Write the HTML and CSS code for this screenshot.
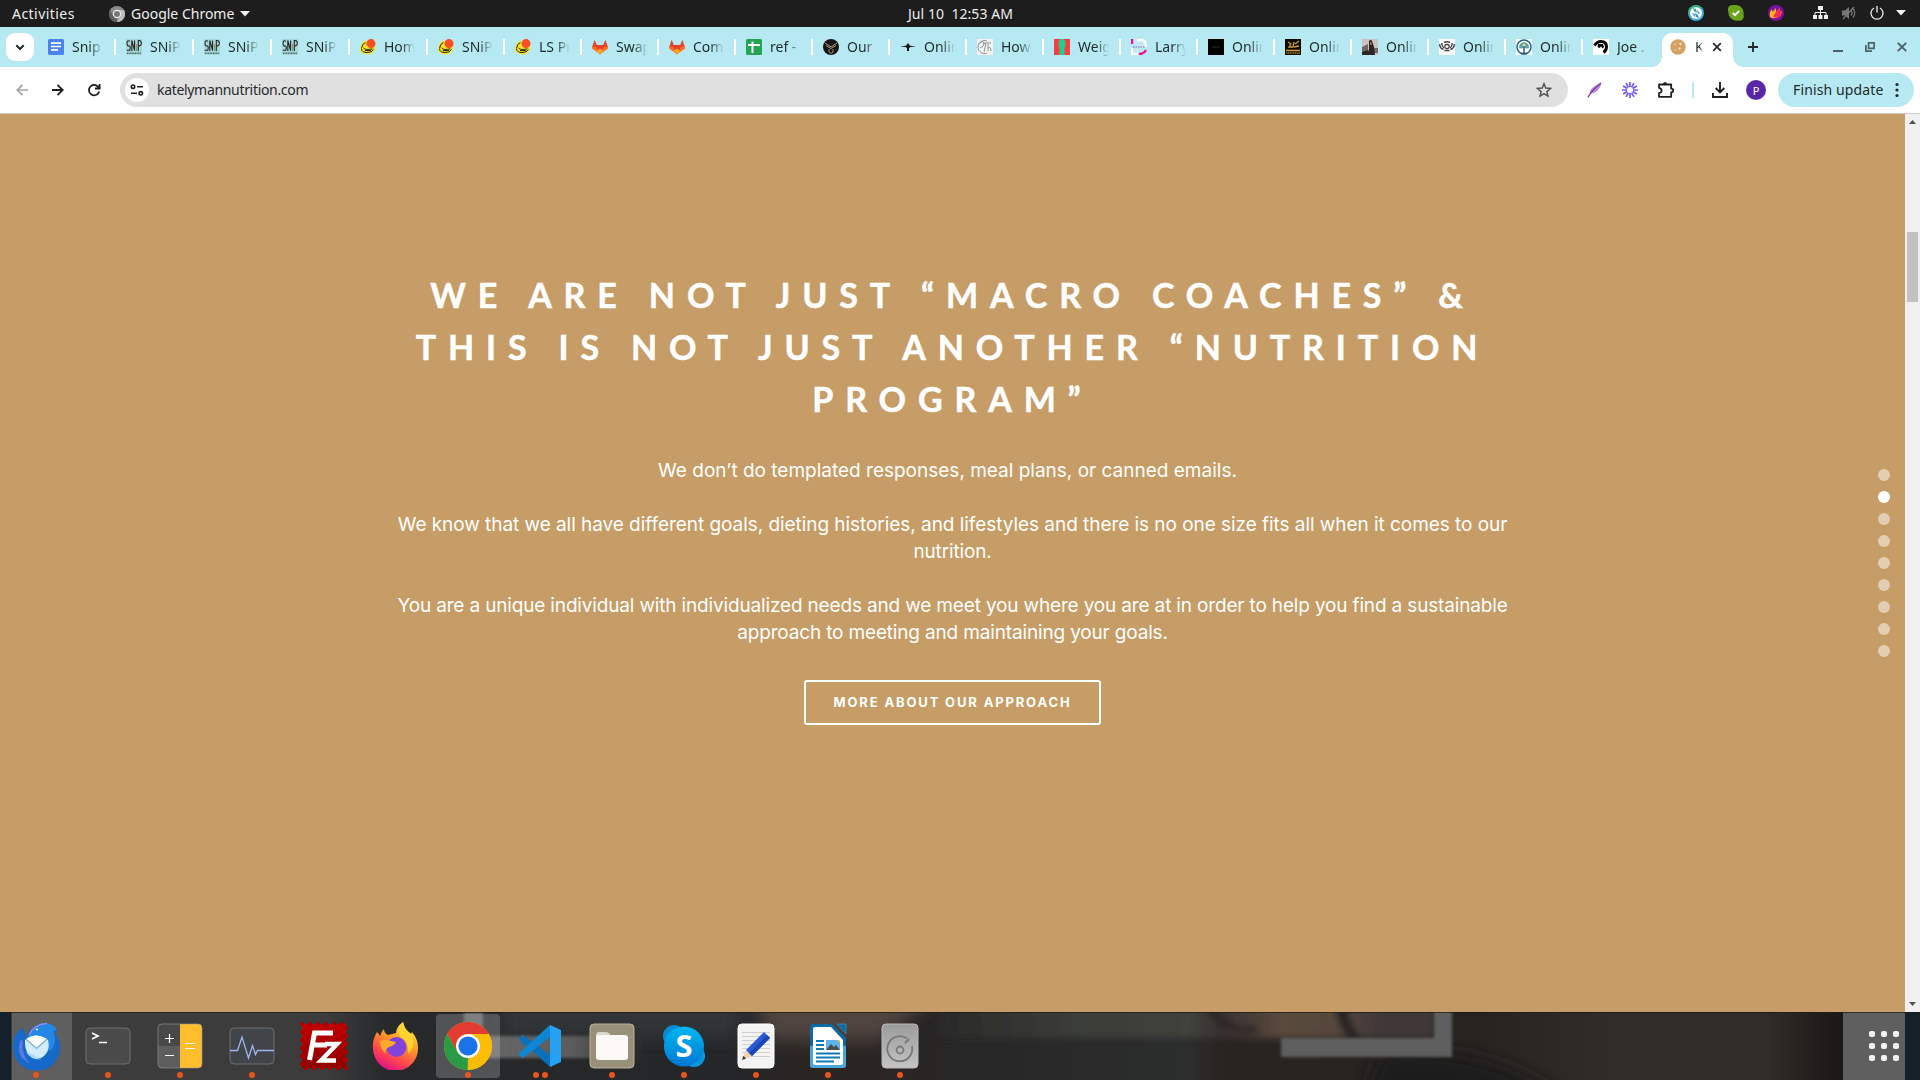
FILE: index.html
```html
<!DOCTYPE html>
<html lang="en">
<head>
<meta charset="utf-8">
<title>katelymannutrition.com</title>
<link rel="stylesheet" href="styles.css">
</head>
<body>
<svg class="defs" aria-hidden="true">
  <symbol id="snip" viewBox="0 0 16 16"><path fill="#a9d5d6" d="M0 0h16v16H0z"/><path fill="none" stroke="#20282a" stroke-width="1.1" d="M4 2.200Q1 .8 1 4t2 3 .8 4.300H.8M5.800 12V1.500l2.800 10V1.500M12.300 12V1.600q3-.5 3 2.600t-3 2.600"/><path stroke="#d87a3a" d="M10.500 5v3"/><path stroke="#46b58c" d="M10.500 8v4"/><path stroke="#49646a" stroke-width="1.400" stroke-dasharray="1 .6" d="M1 14.300h14"/></symbol>
  <symbol id="hat" viewBox="0 0 16 16"><path fill="#f7e32a" d="M0 9Q1 3 6 1.500L15.500 8Q15 14.500 8 15.500 1 15 0 11z"/><path fill="none" stroke="#2a260a" stroke-width="1" d="M1.500 9.500Q2 4.500 5.500 3.500M3.500 9q2 2.500 9 .8M1.500 10q.5 3.500 5.500 3.500 5 0 6.500-3M5 11.600l6-.3"/><circle cx="11" cy="4.600" r="4.500" fill="#fb4d22"/></symbol>
  <symbol id="fox" viewBox="0 0 16 16"><path fill="#e24329" d="M2.700.7 4.700 6h6.600l2-5.300L16 8.500 8 15.300 0 8.500z"/><path fill="#fc6d26" d="M.3 7.500 4 8l4 7.300L0 9.500zM15.700 7.500 12 8l-4 7.300L16 9.500z"/><path fill="#fca326" d="M4.500 12 8 9.500l3.500 2.500L8 15.500z"/></symbol>
  <symbol id="chrome" viewBox="0 0 48 48"><circle cx="24" cy="24" r="24" fill="#fbbc05"/><path fill="#e23b32" d="M3.200 12A24 24 0 0 1 44.800 12H24L13.600 30z"/><path fill="#2a9a46" d="M3.200 12 13.600 30 24 36l-.4 12A24 24 0 0 1 3.200 12z"/><path fill="#fbbc05" d="M24 12h20.800A24 24 0 0 1 23.600 48L34.400 30z"/><circle cx="24" cy="24" r="12" fill="#fff"/><circle cx="24" cy="24" r="9.600" fill="#1a73e8"/></symbol>
</svg>

<header class="topbar">
  <span class="activities">Activities</span>
  <span class="appmenu">
    <svg width="16" height="16" viewBox="0 0 16 16"><circle cx="8" cy="8" r="8" fill="#8b8b8b"/><path fill="#bdbdbd" d="M8 4h7A8 8 0 0 1 8 16l3.500-6z"/><path fill="#5f5f5f" d="M1 4 4.500 10 8 12v4A8 8 0 0 1 1 4z"/><circle cx="8" cy="8" r="4.200" fill="#eee"/><circle cx="8" cy="8" r="3" fill="#777"/></svg>
    <span class="appname">Google Chrome</span>
    <svg width="10" height="6" viewBox="0 0 10 6"><path fill="#f2f2f2" d="M0 0h10L5 5.500z"/></svg>
  </span>
  <span class="clock">Jul 10&nbsp; 12:53 AM</span>
  <span class="tray">
    <svg class="t1" width="16" height="16" viewBox="0 0 16 16"><circle cx="8" cy="8" r="8" fill="#3fa9e0"/><path fill="#27b27c" d="M0 8a8 8 0 0 1 14-5L8 8z"/><circle cx="8" cy="8" r="6" fill="#fff"/><path fill="#2aa98c" d="m5 3 3 1 1 4-3-2z"/><path fill="#3192d8" d="m11 13-3-1-1-4 3 2zM9 5l3 3-2 1zM4 8l3 1v3z"/></svg>
    <svg class="t2" width="16" height="16" viewBox="0 0 16 16"><path fill="#68a51c" d="M4 0h4a8 8 0 0 1 7.500 9.500A4.500 4.500 0 0 1 10 15.500 8 8 0 0 1 .5 7 4.500 4.500 0 0 1 4 0z"/><path fill="none" stroke="#fff" stroke-width="1.800" d="m4.800 8 2.200 2.200 4.200-4.400"/></svg>
    <svg class="t3" width="16" height="16" viewBox="0 0 16 16"><circle cx="8" cy="8" r="8" fill="#7d109c"/><path fill="#ffb31f" d="M2 12Q1 7 4 4l.5 3L8 3v4l4-4-1 4 3-1q0 5-5 6.500T2 12z"/><path fill="#f52a5a" d="m8 7 4-4-1 4 3-1q0 5-5 6.500-3 0-4-1z"/></svg>
    <svg class="t4" width="15" height="14" viewBox="0 0 15 14"><path fill="#eee" d="M5 0h5v4H5zM0 9h4v4H0zM5.500 9h4v4h-4zM11 9h4v4h-4z"/><path fill="none" stroke="#eee" d="M7.500 4v5M2 9V6.500h11V9"/></svg>
    <svg class="t5" width="15" height="14" viewBox="0 0 15 14"><path fill="#777" d="M0 4.500h3L7 1v12L3 9.500H0z"/><path fill="none" stroke="#777" stroke-width="1.300" d="M9 4.500q2 2.500 0 5M11 2.500q3.500 4.500 0 9M1 13 12 1"/></svg>
    <svg class="t6" width="14" height="14" viewBox="0 0 14 14"><path fill="none" stroke="#eee" stroke-width="1.300" d="M4 2a6 6 0 1 0 6 0M7 0v6.500"/></svg>
    <svg class="t7" width="10" height="6" viewBox="0 0 10 6"><path fill="#f2f2f2" d="M0 0h10L5 5.500z"/></svg>
  </span>
</header>

<nav class="tabs">
  <span class="tabsearch"><svg width="28" height="28" viewBox="0 0 28 28"><path fill="none" stroke="#1f2a2c" stroke-width="2" d="m10.300 12.300 3.700 3.700 3.700-3.700"/></svg></span>
  <div class="tab wide"><svg viewBox="0 0 16 16"><rect width="16" height="16" rx="1.500" fill="#4c82ee"/><path stroke="#fff" stroke-width="1.700" d="M3 4.200h10M3 7.500h10M3 10.900h7"/></svg><span>Snip</span></div>
  <div class="tab wide"><svg><use href="#snip"/></svg><span>SNiP</span></div>
  <div class="tab wide"><svg><use href="#snip"/></svg><span>SNiP</span></div>
  <div class="tab wide"><svg><use href="#snip"/></svg><span>SNiP</span></div>
  <div class="tab wide"><svg><use href="#hat"/></svg><span>Hom</span></div>
  <div class="tab"><svg><use href="#hat"/></svg><span>SNiP</span></div>
  <div class="tab"><svg><use href="#hat"/></svg><span>LS Pr</span></div>
  <div class="tab"><svg><use href="#fox"/></svg><span>Swap</span></div>
  <div class="tab"><svg><use href="#fox"/></svg><span>Com</span></div>
  <div class="tab"><svg viewBox="0 0 16 16"><rect width="16" height="16" rx="1.500" fill="#23a455"/><path stroke="#fff" stroke-width="2" d="M2 6h12M6.500 2.500V14"/></svg><span>ref -</span></div>
  <div class="tab"><svg viewBox="0 0 16 16"><circle cx="8" cy="8" r="8" fill="#151413"/><path fill="none" stroke="#b6a68b" stroke-width=".9" d="m2 4 6 4 6-4M3 6.500l5 3 5-3M6 10v3l2 1.500 2-1.500v-3"/></svg><span>Our</span></div>
  <div class="tab"><svg viewBox="0 0 16 16"><path fill="#0b1517" d="M0 7.500 6 6.700 7.500 4.500h1L10 6.700l6 .8-5.500.6L9 9v3H7V9L5.500 8.100z"/></svg><span>Onlin</span></div>
  <div class="tab"><svg viewBox="0 0 16 16"><path fill="#f4f4f2" d="M0 0h16v16H0z"/><path fill="none" stroke="#8c9297" d="M10 2A6.500 6.500 0 1 0 10 14M2 5q4-4 5-1t-4 5M6 4h8M9 4 7 13M11 5v7m0-3q3-2 3 3"/></svg><span>How</span></div>
  <div class="tab"><svg viewBox="0 0 16 16"><path fill="#f93e43" d="M0 0h16v16H0z"/><path fill="#20cf8c" d="M5 1.500 7 0h2l2 1.500L12 10l-1.500-4v10h-5V6L4 10z"/></svg><span>Weig</span></div>
  <div class="tab"><svg viewBox="0 0 16 16"><path fill="#bfeaf2" d="M0 0h16v16H0z"/><path fill="none" stroke="#fff" stroke-width="2.500" d="M6 1h4.500Q15 1.500 15 8M1 9v6h6"/><path fill="none" stroke="#ed1199" stroke-width="2.500" d="M15 11q-1.500 4-7 4M1 0v5"/><path stroke="#a7a3d8" stroke-width="2" stroke-dasharray="1.500 1" d="M2 8h12"/></svg><span>Larry</span></div>
  <div class="tab"><svg viewBox="0 0 16 16"><path d="M0 0h16v16H0z"/><path stroke="#444" stroke-dasharray="1 .7" d="M4 8h8"/></svg><span>Onlin</span></div>
  <div class="tab"><svg viewBox="0 0 16 16"><path fill="#0b0904" d="M0 0h16v16H0z"/><path fill="none" stroke="#cf9a3c" stroke-width="1.300" d="m3 3 3 2-2 3h4l1-5M10 5l4-3M9 8l5-1M1 11.500h14"/><path stroke="#a67827" stroke-width="1.600" stroke-dasharray="1.300 .5" d="M1 14h14"/></svg><span>Onlin</span></div>
  <div class="tab"><svg viewBox="0 0 16 16"><path fill="#c9c4c1" d="M0 0h16v16H0z"/><path fill="#77665e" d="M0 8 6 5v6l-6 3zM11 9h5v5h-5z"/><path fill="#2b2526" d="M7 2q2-2 3 0l2 6 1 8H5l2-6zM0 13l6-2v5H0z"/><path fill="#b0785d" d="M8 3h1.500v3H8z"/></svg><span>Onlin</span></div>
  <div class="tab"><svg viewBox="0 0 16 16"><path fill="#fafafa" d="M0 0h16v16H0z"/><circle cx="8" cy="7.500" r="2.200" fill="none" stroke="#3c3c3c" stroke-width="1.200"/><path fill="none" stroke="#444" stroke-width="1.400" d="M.8 5q-.5 4 3.700 5.500M3 4q-.5 3 2 5M15.200 5q.5 4-3.700 5.500M13 4q.5 3-2 5M5 3.500q3-1.500 6 0M5.500 11.500h5"/></svg><span>Onlin</span></div>
  <div class="tab"><svg viewBox="0 0 16 16"><path fill="#fff" d="M0 0h16v16H0z"/><circle cx="8" cy="8" r="7" fill="none" stroke="#22638c" stroke-width="1.500"/><path fill="#5aa0ab" d="M3 9q0-5 5-6 5 1 5 6-2 1-5-.5Q5 10 3 9z"/><path stroke="#1e5378" stroke-width="1.400" d="M8 6v8M5 14.500h6"/><circle cx="8" cy="6" r="1.500" fill="#f2d466"/></svg><span>Onlin</span></div>
  <div class="tab last"><svg viewBox="0 0 16 16"><path fill="#fff" d="M0 0h16v16H0z"/><path fill="none" stroke="#080808" stroke-width="3" d="M1.500 6.500Q4 2.500 8 2.500q5.500 0 5.500 5.500 0 3-3 5.500"/><path fill="#080808" d="M5 5h5l1 3-1.500 1.500L8 7.500 6.500 9 4.500 8z"/></svg><span>Joe .</span></div>
  <div class="tab active"><svg viewBox="0 0 16 16"><circle cx="8" cy="8" r="7.700" fill="#d5a163"/><g fill="#f3dfc2"><circle cx="5" cy="5.500" r=".8"/><circle cx="10.500" cy="5" r="1.200"/><circle cx="5.500" cy="11" r=".8"/><circle cx="9.500" cy="9.500" r="1.200"/></g></svg><span>K</span><svg class="x" viewBox="0 0 10 10"><path stroke="#24292b" stroke-width="1.700" d="m1.200 1.200 7.600 7.600m0-7.600L1.200 8.800"/></svg></div>
  <svg class="plus" viewBox="0 0 10 10"><path stroke="#20292b" stroke-width="1.800" d="M5 0v10M0 5h10"/></svg>
  <div class="win">
    <svg viewBox="0 0 10 10"><path fill="#4d6266" d="M0 8h10v2H0z"/></svg>
    <svg viewBox="0 0 10 10"><path fill="none" stroke="#4d6266" stroke-width="1.700" d="M3.600.9h5.500v5.500H3.600zM.9 3v6.100H7"/></svg>
    <svg viewBox="0 0 10 10"><path stroke="#4d6266" stroke-width="1.900" d="m.8.8 8.400 8.400m0-8.400L.8 9.200"/></svg>
  </div>
</nav>

<div class="toolbar">
  <span class="cell"><svg width="12" height="12" viewBox="0 0 12 12"><path fill="none" stroke="#a2a2a2" stroke-width="1.700" d="M12 6H1.500M6.500.8 1.300 6l5.200 5.200"/></svg></span>
  <span class="cell"><svg width="12" height="12" viewBox="0 0 12 12"><path fill="none" stroke="#1f1f1f" stroke-width="1.800" d="M0 6h10.500M5.500.8 10.700 6l-5.200 5.200"/></svg></span>
  <span class="cell"><svg width="14" height="14" viewBox="0 0 14 14"><path fill="none" stroke="#1f1f1f" stroke-width="1.800" d="M12 5.200A5.200 5.200 0 1 0 12.200 8.500M12.600 1v4.500H8"/></svg></span>
  <div class="omnibox">
    <span class="site"><svg width="14" height="12" viewBox="0 0 14 12"><g fill="none" stroke="#1f1f1f" stroke-width="1.600"><circle cx="3" cy="2.700" r="1.700"/><path d="M7 2.700h6M1 9.300h6"/><circle cx="10.800" cy="9.300" r="1.700"/></g></svg></span>
    <span class="url">katelymannutrition.com</span>
    <svg class="star" width="16" height="16" viewBox="0 0 16 16"><path fill="none" stroke="#555" stroke-width="1.500" d="m8 1.800 1.800 4.300 4.700.4-3.600 3.100L12 14.200 8 11.700l-4 2.500 1.100-4.600L1.500 6.500l4.700-.4z"/></svg>
  </div>
  <span class="cell ext1"><svg width="15" height="16" viewBox="0 0 15 16"><path fill="#b98ad2" d="M2.500 11.500Q3 7 7 4.500 11 2 14.500.5 14 5 11 8q-3 3.500-8.500 3.500z"/><path stroke="#7d35a5" stroke-width="1.300" fill="none" d="M.8 15.500Q5 8 14 1"/></svg></span>
  <span class="cell"><svg width="16" height="16" viewBox="0 0 16 16"><g stroke="#6b57f2" stroke-width="1.700"><path d="M8 0v5M8 11v5M0 8h5M11 8h5M4 1.100l2.500 4.300M9.500 10.600l2.500 4.300M12 1.100 9.500 5.400M6.500 10.600 4 14.900M1.100 4l4.300 2.500M10.600 9.500l4.300 2.500M14.900 4l-4.300 2.500M5.400 9.500 1.100 12"/></g></svg></span>
  <span class="cell ext3"><svg width="18" height="18" viewBox="0 0 18 18"><path fill="none" stroke="#1f1f1f" stroke-width="1.800" stroke-linejoin="round" d="M2 3.500h12.200v4.200q2 .2 2 1.800t-2 1.800v4.500H2v-3.600q2.600-.6 2.600-2.700T2 6.800z"/><path fill="#1f1f1f" d="M5.700 3.500q.3-2.500 2.300-2.500t2.300 2.500z"/></svg></span>
  <span class="divider"></span>
  <span class="cell dl"><svg width="16" height="16" viewBox="0 0 16 16"><path fill="none" stroke="#1f1f1f" stroke-width="1.900" d="M8 0v10M3.700 6 8 10.300 12.300 6M1 11v4h14v-4"/></svg></span>
  <span class="avatar">P</span>
  <span class="update"><span>Finish update</span><svg width="4" height="16" viewBox="0 0 4 16"><g fill="#1f2a2c"><circle cx="2" cy="2.500" r="1.600"/><circle cx="2" cy="8" r="1.600"/><circle cx="2" cy="13.500" r="1.600"/></g></svg></span>
</div>

<main class="viewport">
  <section class="page">
    <h1><span>WE ARE NOT JUST “MACRO COACHES” &amp;</span><span>THIS IS NOT JUST ANOTHER “NUTRITION</span><span>PROGRAM”</span></h1>
    <p class="lead">We don’t do templated responses, meal plans, or canned emails.</p>
    <p>We know that we all have different goals, dieting histories, and lifestyles and there is no one size fits all when it comes to our<br><span class="tight">nutrition.</span></p>
    <p class="tight">You are a unique individual with individualized needs and we meet you where you are at in order to help you find a sustainable<br>approach to meeting and maintaining your goals.</p>
    <a class="cta">MORE ABOUT OUR APPROACH</a>
    <div class="dots"><i></i><i class="on"></i><i></i><i></i><i></i><i></i><i></i><i></i><i></i></div>
  </section>
  <aside class="scroll">
    <svg width="7" height="4" viewBox="0 0 7 4"><path fill="#505050" d="M0 4h7L3.500 0z"/></svg>
    <div class="thumb"></div>
    <svg class="down" width="7" height="4" viewBox="0 0 7 4"><path fill="#505050" d="M0 0h7L3.500 4z"/></svg>
  </aside>
</main>

<footer class="dock">
  <svg class="wall" width="1920" height="68" viewBox="0 0 1920 68" preserveAspectRatio="none">
    <defs>
      <filter id="b8" x="-20%" y="-50%" width="140%" height="200%"><feGaussianBlur stdDeviation="9"/></filter>
      <filter id="b4" x="-20%" y="-50%" width="140%" height="200%"><feGaussianBlur stdDeviation="3.500"/></filter>
      <filter id="b2" x="-5%" y="-20%" width="110%" height="140%"><feGaussianBlur stdDeviation="1.500"/></filter>
      <linearGradient id="base"><stop offset="0" stop-color="#3c3c3c"/><stop offset=".17" stop-color="#3c3c3c"/><stop offset=".2" stop-color="#27292b"/><stop offset=".38" stop-color="#242628"/><stop offset=".43" stop-color="#2b2522"/><stop offset=".51" stop-color="#272727"/><stop offset=".62" stop-color="#2c2d2d"/><stop offset=".635" stop-color="#2a2421"/><stop offset=".7" stop-color="#28231f"/><stop offset=".77" stop-color="#272420"/><stop offset=".84" stop-color="#302d28"/><stop offset=".92" stop-color="#302d28"/><stop offset=".955" stop-color="#1c1a17"/></linearGradient>
      <linearGradient id="strip"><stop offset="0" stop-color="#6a6a6a"/><stop offset=".6" stop-color="#5c5c5c"/><stop offset="1" stop-color="#5c5c5c" stop-opacity="0"/></linearGradient>
      <linearGradient id="top" gradientUnits="userSpaceOnUse" x1="940" x2="1440"><stop offset="0" stop-color="#2a2a29"/><stop offset=".25" stop-color="#3a3b37"/><stop offset=".5" stop-color="#41423b"/><stop offset=".56" stop-color="#353130"/><stop offset=".68" stop-color="#5a483d"/><stop offset=".8" stop-color="#56473d"/><stop offset=".88" stop-color="#403737"/><stop offset="1" stop-color="#403a38"/></linearGradient>
    </defs>
    <path fill="url(#base)" d="M0 0h1920v68H0z"/>
    <g filter="url(#b8)">
      <path fill="#323537" d="M500-20h240v44H500z"/>
      <path fill="#51443f" d="M750-20h190L880 28H770z"/>
      <path fill="#1c1c1b" d="M1380 40q120-10 200 60h-220z"/>
    </g>
    <g filter="url(#b4)">
      <path fill="url(#top)" d="M940-20h494v46H940z"/>
      <path fill="#262423" d="M1212-5q20 26 42 18l6 7q-30 6-54-20zM1334-10q4 30 16 36h12q-14-12-14-36z"/>
    </g>
    <g filter="url(#b2)">
      <path fill="#60605f" d="M464-5h19v32h-19z"/>
      <path fill="url(#strip)" d="M464 24h180v22H464z"/>
      <path fill="#5f5f5f" d="M1281 26h153V-6h18v51h-171z"/>
    </g>
    <path fill="#16202b" d="M0 0h11v68H0zM1905 0h15v68h-15z"/>
    <path fill="#5f5f5f" d="M12 0h60v68H12zM1843 0h62v68h-62z"/>
    <path fill="#1a1a1a" opacity=".7" d="M0 0h1920v1H0z"/>
  </svg>
  <span class="app on1"><svg viewBox="0 0 48 48"><path fill="#1668c9" d="M9 6Q15 10 13 17 17 4 31 1q9-1 14 7l-2 3q5 7 5 14a23.500 23.500 0 0 1-47 1Q0 15 9 6z"/><path fill="#2387e6" d="M15 17Q20 2 33 1q8 0 12 7l-4 1q5 10-2 20z"/><path fill="none" stroke="#9a86e8" stroke-width="1.600" d="M17 13Q22 2 35 1.500"/><path fill="#5a7ae0" d="M9 17Q4 28 10 36l8 6Q9 32 11 20z"/><path fill="#d3ecfc" d="M13 18q11-9 23 0 3 12-7 18Q12 37 13 18z"/><path fill="#fff" d="M14 17q10-7 21 0l-10.500 9z"/><path fill="none" stroke="#7dacd6" stroke-width="1.200" d="m14 17 10.500 9.500L35 17"/><path fill="#a9d9fb" d="M14 30q6 9 16 7-6-1-8-4z"/><circle cx="25" cy="7.500" r="1" fill="#fff"/></svg><b></b></span>
  <span class="app"><svg viewBox="0 0 48 48"><rect x="2" y="6" width="44" height="36" rx="4" fill="#4a4a4a" stroke="#6e6e6e"/><path fill="none" stroke="#fff" stroke-width="1.700" d="m8 11 6 3-6 3M15 20.500h8"/></svg><b></b></span>
  <span class="app"><svg viewBox="0 0 48 48"><rect x="2" y="2" width="44" height="44" rx="4" fill="#5d5d5d"/><path fill="#484848" d="M2 24V6q0-4 4-4h18v22z"/><path fill="#fdbd2c" d="M24 2h18q4 0 4 4v36q0 4-4 4H24z"/><path stroke="#fff" stroke-width="1.200" d="M9 16.500h9M13.500 12v9M9 33.500h9M29 21.500h10M29 26.500h10"/><rect x="2" y="2" width="44" height="44" rx="4" fill="none" stroke="#999" stroke-opacity=".6"/></svg><b></b></span>
  <span class="app"><svg viewBox="0 0 48 48"><rect x="2" y="6" width="44" height="36" rx="4" fill="#414448" stroke="#6c6c6c"/><path fill="none" stroke="#9fb4f2" stroke-width="1.300" d="M2 28.500h7.500L14 15l6.500 21 4-12.500 3 9 2-4H46"/></svg><b></b></span>
  <span class="app"><svg viewBox="0 0 48 48"><defs><linearGradient id="fz" x2="0" y2="1"><stop stop-color="#c00000"/><stop offset="1" stop-color="#8e0000"/></linearGradient></defs><rect x="2" y="2" width="44" height="44" fill="url(#fz)"/><rect x="1.800" y="1.800" width="44.400" height="44.400" fill="none" stroke="#a80000" stroke-width="4" stroke-linecap="round" stroke-dasharray="0 8.070"/><path fill="none" stroke="#fff" stroke-width="5" d="M9.500 38 14.500 11H33M12 23h15"/><path fill="none" stroke="#fff" stroke-width="4.500" d="M25 22h12L21 38.500h15"/></svg></span>
  <span class="app"><svg viewBox="0 0 48 48"><defs><linearGradient id="ff" x1=".8" y1="0" x2=".3" y2="1"><stop stop-color="#fff24a"/><stop offset=".4" stop-color="#ff9a26"/><stop offset=".75" stop-color="#ff4052"/><stop offset="1" stop-color="#d8108a"/></linearGradient></defs><path fill="url(#ff)" d="M5 10q2 2 3 4 1-4 4-7 0 4 4 6l8-2q0-6 7-11 1 7 8 12l1-2q6 7 6 16a22.500 22.500 0 0 1-45 1Q0 18 5 10z"/><circle cx="24.500" cy="25" r="10" fill="#8143d8"/><path fill="#ffac2c" d="M8 19q6-2 11 0l5 1q-2 4-7 5-5 2-3 7Q8 27 8 19z"/><path fill="#ffd42f" d="M31 0q1 7 8 12 6 12-3 20 1-14-8-17-4-8 3-15z"/></svg></span>
  <span class="app focus"><svg viewBox="0 0 48 48"><use href="#chrome"/></svg><b></b></span>
  <span class="app two"><svg viewBox="0 0 48 48"><path fill="#0a70ba" d="m3 17 4-4 27 20v12z"/><path fill="#0d86d4" d="M3 31 34 3v12L7 36l-4-3z"/><path fill="#0a70ba" d="m3 17 4-4 7 6-6 5z"/><path fill="#26a0f2" d="m34 3 11 5v32l-11 5z"/></svg><b></b><b></b></span>
  <span class="app"><svg viewBox="0 0 48 48"><rect x="2" y="2" width="44" height="44" rx="4" fill="#989078" stroke="#b8b19b"/><path fill="#dcd9cf" d="M8 14q0-4 3-4h7q3 0 5 4h14v6H8z"/><rect x="8" y="13" width="32" height="25" rx="3" fill="#faf9f7"/></svg><b></b></span>
  <span class="app"><svg viewBox="0 0 48 48"><defs><linearGradient id="sk" x2="0" y2="1"><stop stop-color="#00b7f1"/><stop offset="1" stop-color="#0078d4"/></linearGradient></defs><circle cx="14" cy="14" r="11" fill="#078bd2"/><circle cx="34" cy="34" r="11" fill="#0b96df"/><circle cx="24" cy="24.500" r="20" fill="url(#sk)"/><text x="24" y="35" class="skype">S</text></svg><b></b></span>
  <span class="app"><svg viewBox="0 0 48 48"><rect x="6" y="2" width="36" height="44" rx="4" fill="#f3f3f4" stroke="#fff"/><path stroke="#cfcfcf" d="M10 10.500h28M10 14.500h28M10 18.500h28M10 22.500h28M10 26.500h28M10 30.500h28M10 34.500h28"/><path fill="#f4cfae" d="m10 38 4-10 6 6z"/><path fill="#333" d="m10 38 1.500-4 2.500 2.500z"/><path fill="#2c5bd8" d="m14 28 18-18 6 6-18 18z"/><path fill="#1c46b8" d="m17 31 18-18 3 3-18 18z"/></svg><b></b></span>
  <span class="app"><svg viewBox="0 0 48 48"><path fill="#0c6aa0" d="M9 2h19l14 14v27q0 3-3 3H9q-3 0-3-3V5q0-3 3-3z"/><path fill="#4ba6d8" d="M6 24h36v19q0 3-3 3H9q-3 0-3-3z"/><path fill="#fff" d="M11 5h16l12 13v23q0 2-2 2H11q-2 0-2-2V7q0-2 2-2z"/><path fill="#0c6aa0" stroke="#3d9ccf" stroke-width=".6" d="M33 2h9v10z"/><path stroke="#1278b4" stroke-width="1.900" d="M12 19h8M12 23h8M12 27h8M12 31.500h24M12 35.500h24M12 39.500h18"/><path fill="#62b2ea" d="M22 18h14v10H22z"/><path fill="#4a4f4c" d="m22 28 5-6 3 3 2-2 4 5z"/><path fill="#f5c842" d="M33 18h3v3z"/></svg><b></b></span>
  <span class="app"><svg viewBox="0 0 48 48"><defs><linearGradient id="dk" x2="0" y2="1"><stop stop-color="#9b9b9b"/><stop offset="1" stop-color="#c4c4c4"/></linearGradient></defs><rect x="6" y="2" width="36" height="44" rx="4" fill="url(#dk)" stroke="#b9b9b9"/><g fill="none" stroke="#787878" stroke-width="1.800"><path d="M36 24a12.500 12.500 0 1 1-5-7.500"/><path d="m29 21 4-4"/><circle cx="24" cy="28" r="3.500"/></g></svg><b></b></span>
  <svg class="grid" viewBox="0 0 30 30"><g fill="#f2f2f2"><rect width="6" height="6" rx="2"/><rect x="12" width="6" height="6" rx="2"/><rect x="24" width="6" height="6" rx="2"/><rect y="12" width="6" height="6" rx="2"/><rect x="12" y="12" width="6" height="6" rx="2"/><rect x="24" y="12" width="6" height="6" rx="2"/><rect y="24" width="6" height="6" rx="2"/><rect x="12" y="24" width="6" height="6" rx="2"/><rect x="24" y="24" width="6" height="6" rx="2"/></g></svg>
</footer>
</body>
</html>
```
FILE: styles.css
```css
* { box-sizing: border-box; }
body { margin: 0; width: 1920px; height: 1080px; overflow: hidden; display: flex; flex-direction: column; font-family: "Noto Sans", sans-serif; color: #1f2a2c; }
svg { display: block; flex: none; }
.defs { position: absolute; width: 0; height: 0; }

.topbar { height: 27px; flex: none; display: grid; grid-template-columns: 109px 799px 1fr auto; align-items: center; background: #1d1d1d; color: #eee; font-size: 14px; white-space: nowrap; }
.activities { padding-left: 12px; letter-spacing: .45px; }
.appmenu { display: flex; align-items: center; gap: 6px; }
.clock { letter-spacing: .05px; padding-bottom: 1px; }
.tray { display: flex; align-items: center; padding: 0 14px 1px 0; }
.t2, .t3 { margin-left: 24px; }
.t4 { margin-left: 29px; }
.t5 { margin-left: 14px; }
.t6 { margin-left: 13px; }
.t7 { margin-left: 12px; }

.tabs { height: 40px; flex: none; display: flex; align-items: center; background: #b6e9f1; padding-left: 6px; font-size: 14px; }
.tabsearch { width: 28px; height: 28px; border-radius: 9px; background: #fff; margin-right: 4px; }
.tab { width: 77px; height: 16px; display: flex; align-items: center; gap: 8px; padding-left: 10px; border-right: 2px solid #fff; flex: none; }
.tab.wide { width: 78px; }
.tab.last { border-color: transparent; width: 79px; }
.tab svg { width: 16px; height: 16px; }
.tab span { width: 31px; white-space: nowrap; line-height: 20px; -webkit-mask-image: linear-gradient(90deg, #000 55%, transparent); mask-image: linear-gradient(90deg, #000 55%, transparent); }
.tab.active { width: 71px; height: 34px; align-self: flex-end; border: 0; border-radius: 10px 10px 0 0; background: #fff; padding-left: 8px; padding-bottom: 6px; position: relative; gap: 9px; }
.tab.active::before, .tab.active::after { content: ""; position: absolute; bottom: 0; width: 10px; height: 10px; }
.tab.active::before { left: -10px; background: radial-gradient(circle at 0 0, transparent 9.500px, #fff 10px); }
.tab.active::after { right: -10px; background: radial-gradient(circle at 100% 0, transparent 9.500px, #fff 10px); }
.tab.active span { width: 8px; }
.tab.active .x { width: 10px; height: 10px; }
.plus { width: 10px; height: 10px; margin-left: 15px; }
.win { margin-left: auto; display: flex; gap: 22px; padding-right: 13px; }
.win svg { width: 10px; height: 10px; }

.toolbar { height: 47px; flex: none; display: flex; align-items: center; background: #fff; border-bottom: 1px solid #cfcfcf; padding-left: 4px; font-size: 14px; white-space: nowrap; }
.cell { width: 36px; display: flex; justify-content: center; }
.omnibox { width: 1448px; height: 34px; margin-left: 8px; border-radius: 17px; background: #e0e0e0; display: flex; align-items: center; padding: 0 16px 0 5px; }
.site { width: 24px; height: 24px; border-radius: 50%; background: #fff; display: flex; align-items: center; justify-content: center; margin-right: 8px; }
.url { letter-spacing: -.32px; padding-bottom: 2px; }
.star { margin-left: auto; }
.ext1 { margin-left: 8px; }
.divider { width: 2px; height: 16px; background: #b6e9f1; margin: 0 8px; }
.avatar { width: 20px; height: 20px; border-radius: 50%; background: #5827a5; color: #fff; font-size: 11px; display: flex; align-items: center; justify-content: center; margin: 0 12px 0 8px; }
.update { width: 136px; height: 34px; border-radius: 17px; background: #b6e9f1; display: flex; align-items: center; justify-content: space-between; padding: 0 15px; letter-spacing: .13px; }
.update span { padding-bottom: 2px; }

.viewport { height: 898px; flex: none; display: flex; }
.page { flex: 1; background: #c69d66; color: #fff; position: relative; display: flex; flex-direction: column; align-items: center; padding-top: 155px; font-family: Inter, sans-serif; }
h1 { margin: 0 0 32px; font: 700 34px/52px Lato, sans-serif; letter-spacing: 11.850px; -webkit-text-stroke: .5px #fff; display: flex; flex-direction: column; align-items: center; white-space: nowrap; }
p { margin: 0 0 27px; font-size: 19px; line-height: 27px; text-align: center; white-space: nowrap; letter-spacing: -.05px; }
.lead { padding-right: 10px; letter-spacing: 0; }
.tight { letter-spacing: -.16px; }
.cta { width: 297px; height: 45px; margin-top: 7px; padding-bottom: 1px; border: 2px solid #fff; border-radius: 3px; display: flex; align-items: center; justify-content: center; font-size: 13px; font-weight: 700; letter-spacing: 1.850px; white-space: nowrap; }
.dots { position: absolute; left: 1878px; top: 355px; display: flex; flex-direction: column; gap: 10px; }
.dots i { width: 12px; height: 12px; border-radius: 50%; background: rgba(255,255,255,.5); }
.dots .on { background: #fff; }
.scroll { width: 15px; background: #f0f0f0; display: flex; flex-direction: column; align-items: center; padding: 6px 0; }
.thumb { width: 11px; height: 70px; background: #c1c1c1; margin-top: 108px; }
.down { margin-top: auto; }

.dock { height: 68px; flex: none; position: relative; display: flex; align-items: center; }
.wall { position: absolute; inset: 0; }
.app { position: relative; width: 64px; height: 64px; margin-right: 8px; border-radius: 4px; display: flex; flex-wrap: wrap; justify-content: center; align-content: flex-start; gap: 0 3px; padding-top: 8px; }
.on1 { margin-left: 4px; }
.app svg { width: 48px; height: 48px; margin: 0 8px; }
.app b { width: 6px; height: 6px; border-radius: 50%; background: #e95420; margin-top: 2px; }
.focus { background: rgba(255,255,255,.2); }
.skype { font: 700 31px "Open Sans", sans-serif; fill: #fff; text-anchor: middle; }
.grid { width: 30px; height: 30px; position: relative; margin-left: auto; margin-right: 21px; }
```
